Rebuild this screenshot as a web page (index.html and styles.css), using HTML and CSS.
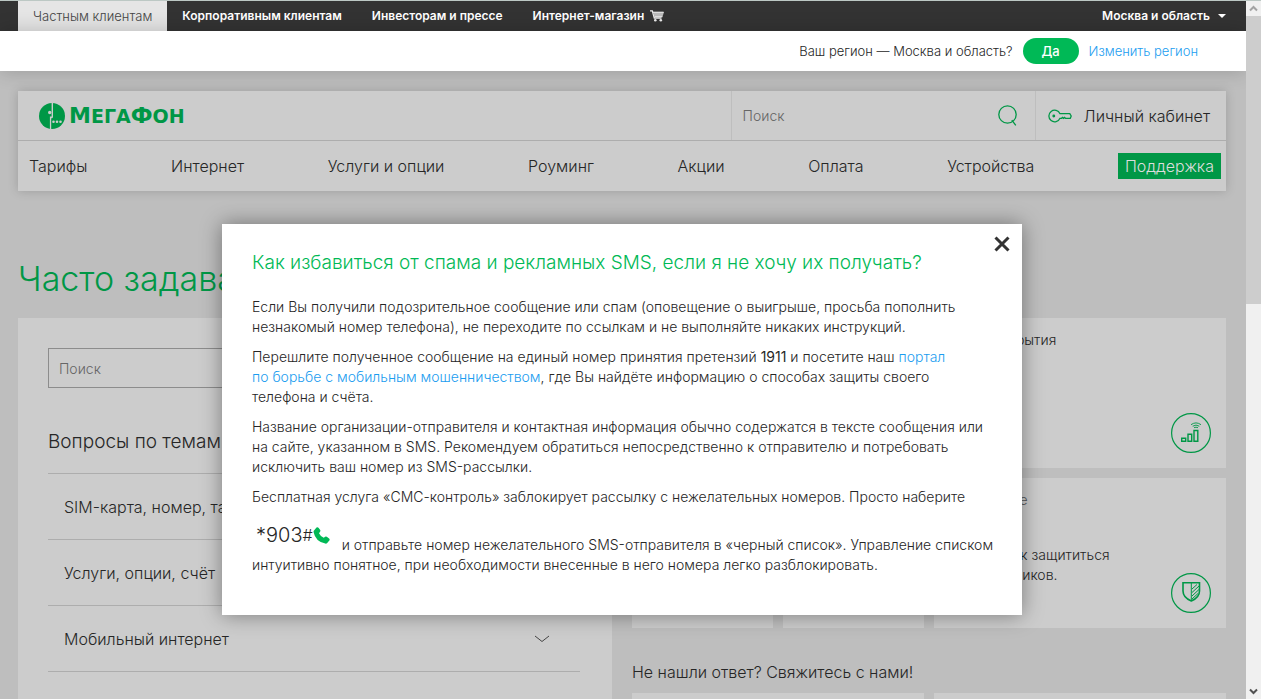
FILE: index.html
```
<!DOCTYPE html>
<html lang="ru">
<head>
<meta charset="utf-8">
<title>МегаФон — Поддержка</title>
<link rel="stylesheet" href="styles.css">
</head>
<body>
<div class="page">
  <header class="topbar">
    <nav class="segments">
      <a class="segment segment-active" href="#">Частным клиентам</a>
      <a class="segment" href="#">Корпоративным клиентам</a>
      <a class="segment" href="#">Инвесторам и прессе</a>
      <a class="segment" href="#">Интернет-магазин
        <svg class="cart" width="14" height="12" viewBox="0 0 14 12"><path d="M0 .8h2.3l2 7.2h7.2" fill="none" stroke="#eee" stroke-width="1.3"/><path d="M3 2h11l-1.6 5H4.4z" fill="#bbb"/><path d="M3 2.2h10.6M12.4 6.800H4.400" stroke="#eee"/><circle cx="5.300" cy="10.200" r="1.300" fill="#eee"/><circle cx="10.800" cy="10.200" r="1.300" fill="#eee"/></svg>
      </a>
    </nav>
    <button class="city" type="button">Москва и область <span class="caret"></span></button>
  </header>
  <div class="region">
    <span>Ваш регион — Москва и область?</span>
    <button class="yes" type="button">Да</button>
    <a class="link" href="#">Изменить регион</a>
  </div>
  <main class="content">
    <section class="menu">
      <div class="menu-top">
        <a class="logo" href="#">
          <svg width="26" height="26" viewBox="0 0 26 26"><circle cx="13" cy="13" r="13" fill="#009746"/><g fill="#ccc"><path d="M12.600 0h1.400v13.500c0 1.500-.8 1.800-1.800 1.800v10.700h-1.300V13.600h1.300c.4 0 .4-.2.4-.6z"/><circle cx="10.700" cy="9.500" r="1.700"/><circle cx="14.500" cy="18.700" r="1.300"/><circle cx="18" cy="18.700" r="1.300"/><circle cx="21.500" cy="18.700" r="1.300"/></g></svg>
          <span class="wordmark">М<small>ЕГА</small>Ф<small>ОН</small></span>
        </a>
        <label class="search">
          <input class="search-input" type="text" placeholder="Поиск" aria-label="Поиск">
          <svg width="20" height="22" viewBox="0 0 20 22" fill="none" stroke="#009746" stroke-width="1.300"><circle cx="9.500" cy="9.500" r="8.700"/><path d="M13.800 15.200l4 5.200"/></svg>
        </label>
        <a class="account" href="#">
          <svg width="24" height="14" viewBox="0 0 24 14" fill="none" stroke="#009746" stroke-width="1.300"><path d="M12 4.700A5.800 5.800 0 1 0 12 9.300h1.500l1-.9 1 .9 1-.9 1 .9h4.800L23.200 7l-1.400-2.300z"/><circle cx="5.800" cy="7" r=".8" fill="#009746"/></svg>
          Личный кабинет
        </a>
      </div>
      <nav class="menu-nav">
        <a href="#">Тарифы</a>
        <a href="#">Интернет</a>
        <a href="#">Услуги и опции</a>
        <a href="#">Роуминг</a>
        <a href="#">Акции</a>
        <a href="#">Оплата</a>
        <a href="#">Устройства</a>
        <a class="current" href="#">Поддержка</a>
      </nav>
    </section>
    <h1 class="title">Часто задаваемые вопросы</h1>
    <div class="columns">
      <section class="faq">
        <input class="faq-search" type="text" placeholder="Поиск" aria-label="Поиск по вопросам">
        <h2 class="faq-title">Вопросы по темам</h2>
        <button class="topic" type="button">SIM-карта, номер, тариф <svg class="chevron" viewBox="0 0 16 8"><path d="M1 1l7 5.500L15 1"/></svg></button>
        <button class="topic" type="button">Услуги, опции, счёт <svg class="chevron" viewBox="0 0 16 8"><path d="M1 1l7 5.500L15 1"/></svg></button>
        <button class="topic" type="button">Мобильный интернет <svg class="chevron" viewBox="0 0 16 8"><path d="M1 1l7 5.500L15 1"/></svg></button>
        <div class="topic-space"></div>
      </section>
      <section class="side">
        <div class="cards">
          <div class="card wide"></div>
          <a class="card wide" href="#">
            <span>Карта покрытия</span>
            <svg class="badge" width="40" height="40" viewBox="0 0 40 40" fill="none" stroke="#009746"><circle cx="20" cy="20" r="19.400" stroke-width="1.200"/><g stroke-width="1.400"><path d="M10.700 25.200h4v3h-4zM17 21.200h3.700v7H17zM23 17.500h3.800v10.700H23z"/></g><g stroke-width=".9"><path d="M20 11.700q5-3.600 10 0M21.700 13.200q3.300-2.200 6.600 0M23 14.700q2-1 4 0"/></g></svg>
          </a>
          <div class="card"></div>
          <div class="card"></div>
          <a class="card wide" href="#">
            <span class="muted">Актуальное</span>
            <span class="card-text">Узнайте как защититься<br>от мошенников.</span>
            <svg class="badge" width="40" height="40" viewBox="0 0 40 40" fill="none" stroke="#009746"><circle cx="20" cy="20" r="19.400" stroke-width="1.200"/><path d="M12 9.700h16.500V18c0 5-3.500 8-8.200 10C15.500 26 12 23 12 18z" stroke-width="1.600"/><path d="M20.300 10v18M21 16l5-4.500M21 19.500l7-6.500M21 23l7-6.500M21 26l6-5.500" stroke-width="1"/></svg>
          </a>
        </div>
        <h2 class="contact-title">Не нашли ответ? Свяжитесь с нами!</h2>
        <div class="cards">
          <div class="card wide"></div>
          <div class="card wide"></div>
        </div>
      </section>
    </div>
  </main>
  <div class="overlay">
    <div class="dialog" role="dialog" aria-labelledby="dialog-title">
      <button class="close" type="button" aria-label="Закрыть"><svg width="16" height="16" viewBox="0 0 16 16"><path d="M1.500 1.500l13 13M14.500 1.500l-13 13" stroke="#333" stroke-width="3"/></svg></button>
      <h2 class="dialog-title" id="dialog-title">Как избавиться от спама и рекламных SMS, если я не хочу их получать?</h2>
      <p>Если Вы получили подозрительное сообщение или спам (оповещение о выигрыше, просьба пополнить<br>незнакомый номер телефона), не переходите по ссылкам и не выполняйте никаких инструкций.</p>
      <p>Перешлите полученное сообщение на единый номер принятия претензий <b>1911</b> и посетите наш <a class="link" href="#">портал<br>по борьбе с мобильным мошенничеством</a>, где Вы найдёте информацию о способах защиты своего<br>телефона и счёта.</p>
      <p>Название организации-отправителя и контактная информация обычно содержатся в тексте сообщения или<br>на сайте, указанном в SMS. Рекомендуем обратиться непосредственно к отправителю и потребовать<br>исключить ваш номер из SMS-рассылки.</p>
      <p>Бесплатная услуга «СМС-контроль» заблокирует рассылку с нежелательных номеров. Просто наберите<br><span class="ussd">*903<span class="hash">#</span><svg width="17" height="17" viewBox="0 0 17 17"><path d="M1 3.500L3.500.600q1.200-1 2.200.4l1.500 2q.6 1-.3 2L6 6.200q1.500 3.200 4.800 4.600l1.300-1q.8-.6 1.700 0l2.300 1.800q1 .9.200 2L14 16.200q-.6.600-1.700.4Q2.500 14.500.600 5.200.4 4.200 1 3.500z" fill="#00b956"/></svg></span>и отправьте номер нежелательного SMS-отправителя в «черный список». Управление списком<br>интуитивно понятное, при необходимости внесенные в него номера легко разблокировать.</p>
    </div>
  </div>
</div>
<div class="scrollbar">
  <div class="scroll-up"><svg width="9" height="7" viewBox="0 0 9 7"><path d="M1 5.500L4.500 2 8 5.500" fill="none" stroke="#a3a3a3" stroke-width="2"/></svg></div>
  <div class="scroll-thumb"></div>
  <div class="scroll-down"><svg width="9" height="7" viewBox="0 0 9 7"><path d="M1 1.500L4.500 5 8 1.500" fill="none" stroke="#505050" stroke-width="2"/></svg></div>
</div>
</body>
</html>
```
FILE: styles.css
```
* { box-sizing: border-box; }
body {
  margin: 0;
  height: 100vh;
  display: flex;
  overflow: hidden;
  border-top: 1px solid #bcc8c4;
  background: #bebebe;
  color: #262626;
  font: 300 14px/20px Inter, "Noto Sans", sans-serif;
}
a { color: inherit; text-decoration: none; }
button, input { font: inherit; color: inherit; border: 0; background: none; padding: 0; }
h1, h2, p { margin: 0; font-weight: 300; }
svg { flex: none; }
.link { color: #1b9df0; }

.page { flex: 1; min-width: 0; position: relative; overflow: hidden; white-space: nowrap; }

.topbar {
  height: 30px;
  padding: 0 20px 0 18px;
  display: flex;
  justify-content: space-between;
  background: #333;
  color: #fff;
  font-size: 12px;
  font-weight: 600;
}
.segments { display: flex; }
.segment { display: flex; align-items: center; gap: 6px; padding: 0 15px; }
.segment-active { background: #e5e5e5; color: #444; font-size: 13px; font-weight: 300; }
.city { display: flex; align-items: center; gap: 8px; }
.caret { border: 4px solid transparent; border-top-color: #fff; border-bottom: 0; }

.region {
  position: relative;
  height: 40px;
  padding-right: 48px;
  display: flex;
  align-items: center;
  justify-content: flex-end;
  gap: 10px;
  background: #fff;
  font-size: 13px;
  box-shadow: 0 0 20px rgba(0, 0, 0, .2);
}
.yes { width: 56px; height: 26px; border-radius: 13px; background: #00b956; color: #fff; font-weight: 500; }

.content { padding: 20px 20px 0 18px; }
.menu { background: #ccc; box-shadow: 0 0 10px rgba(0, 0, 0, .18); font-size: 16px; }
.menu-top { height: 50px; display: flex; border-bottom: 1px solid #adadad; }
.logo { flex: 1; display: flex; align-items: center; gap: 4px; padding-left: 21px; color: #009746; }
.wordmark { font: bold 22px/26px "DejaVu Sans", sans-serif; }
.wordmark small { font-size: 19px; }
.search { width: 304px; display: flex; align-items: center; border-left: 1px solid #bebebe; padding: 0 17px 0 11px; }
.search-input { flex: 1; min-width: 0; font-size: 14px; }
::placeholder { color: #666; opacity: 1; }
.account { display: flex; align-items: center; gap: 12px; padding: 0 16px 0 12px; border-left: 1px solid #bebebe; }
.menu-nav { height: 50px; padding: 0 5px 0 11px; display: flex; align-items: center; justify-content: space-between; }
.current { padding: 3px 7px; background: #009746; color: #ddd; }

.title { padding: 64px 0 15px; font-size: 34px; line-height: 48px; font-weight: 300; color: #009746; }
.columns { display: grid; grid-template-columns: 1fr 1fr; gap: 20px; }
.faq { padding: 30px 32px 0 30px; background: #ccc; }
.faq-search { display: block; width: 100%; height: 40px; padding: 0 10px; border: 1px solid #8c8c8c; }
.faq-title { padding: 40px 0 17px; font-size: 19px; line-height: 28px; border-bottom: 1px solid #adadad; }
.topic {
  width: 100%;
  height: 66px;
  padding: 0 30px 0 16px;
  display: flex;
  align-items: center;
  justify-content: space-between;
  border-bottom: 1px solid #adadad;
  font-size: 16px;
}
.chevron { width: 16px; height: 8px; fill: none; stroke: #444; }
.topic-space { height: 66px; }

.cards { display: grid; grid-template-columns: repeat(4, 1fr); grid-auto-rows: 150px; gap: 10px; }
.card { position: relative; padding: 12px 15px; background: #ccc; }
.wide { grid-column: span 2; }
.muted { color: #555; }
.card-text { display: block; padding-top: 35px; }
.badge { position: absolute; right: 15px; bottom: 15px; }
.contact-title { padding: 32px 0 9px; font-size: 16px; line-height: 24px; }

.overlay { position: absolute; inset: 0; padding: 223px 2px 0 0; display: flex; justify-content: center; align-items: flex-start; }
.dialog { position: relative; width: 800px; padding: 25px 30px 30px; background: #fff; box-shadow: 0 0 20px rgba(0, 0, 0, .4); }
.dialog p { padding-bottom: 10px; }
.dialog-title { padding-bottom: 20px; font-size: 19px; line-height: 28px; color: #00b956; }
.close { position: absolute; top: 12px; right: 12px; width: 16px; height: 16px; }
.close svg { display: block; }
.ussd { display: inline-flex; align-items: center; height: 36px; margin-top: 10px; padding: 0 12px 0 4px; vertical-align: 8px; font-size: 20px; }
.hash { font-size: 16px; }

.scrollbar { width: 15px; flex: none; display: flex; flex-direction: column; background: #f0f0f0; }
.scroll-up, .scroll-down { height: 15px; display: grid; place-items: center; }
.scroll-thumb { height: 288px; background: #cdcdcd; }
.scroll-down { margin-top: auto; }
```
